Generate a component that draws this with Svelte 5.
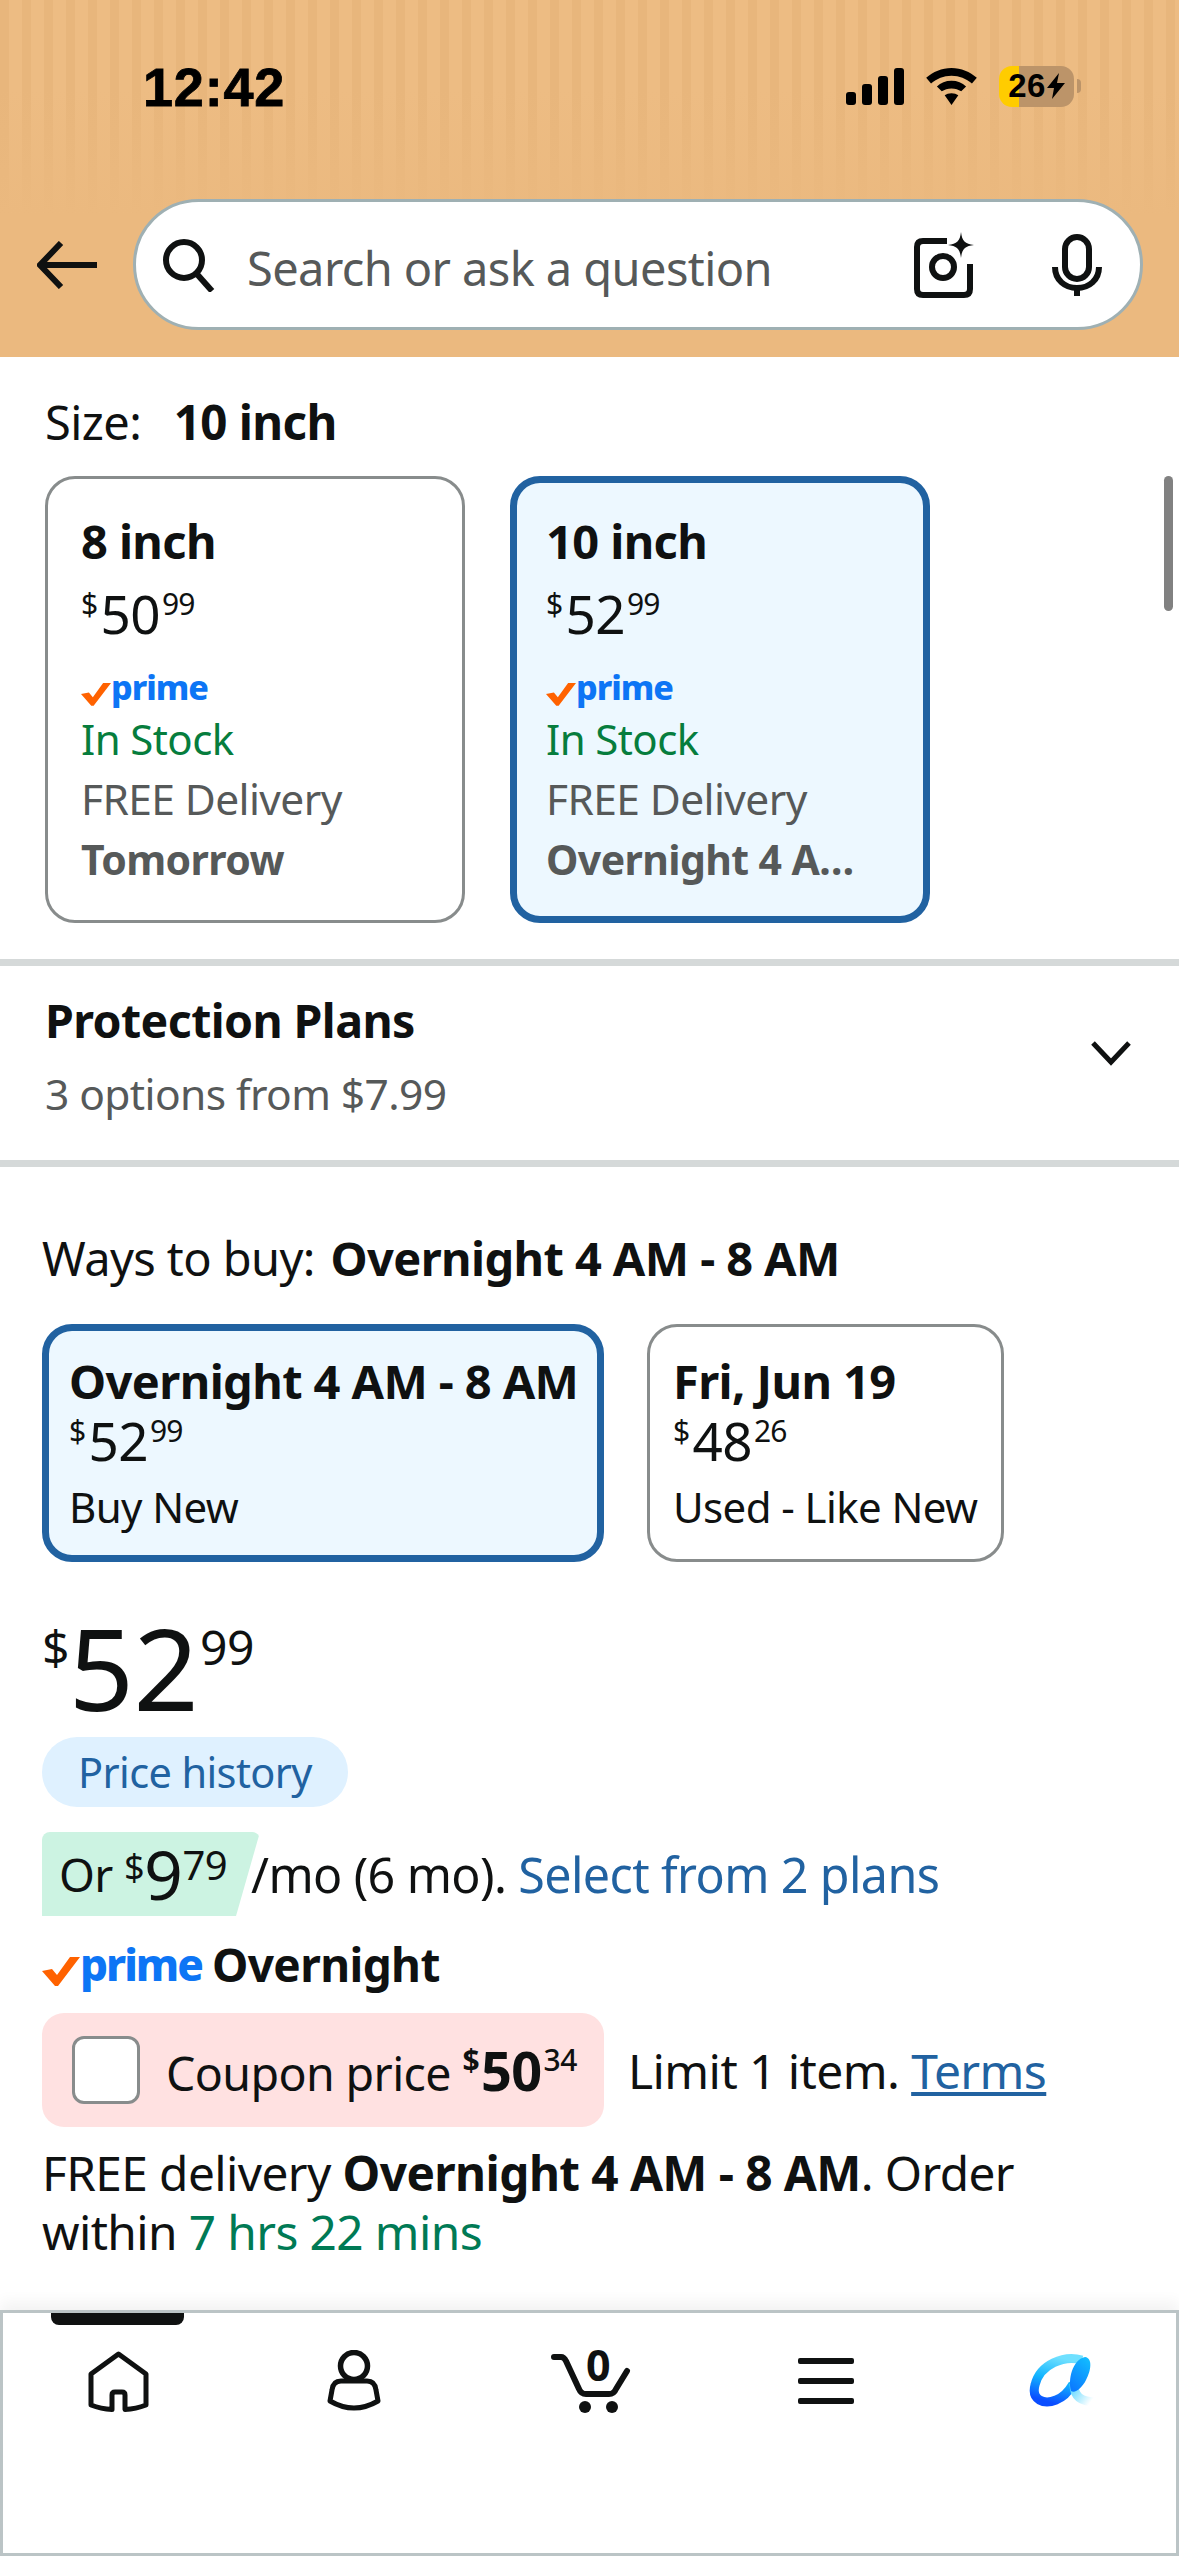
<script>
  const sizes = [
    { name: '8 inch', whole: '50', cents: '99', when: 'Tomorrow', selected: false },
    { name: '10 inch', whole: '52', cents: '99', when: 'Overnight 4 AM - 8 AM', selected: true }
  ];

  const ways = [
    { name: 'Overnight 4 AM - 8 AM', whole: '52', cents: '99', label: 'Buy New', selected: true },
    { name: 'Fri, Jun 19', whole: '48', cents: '26', label: 'Used - Like New', selected: false }
  ];
</script>

{#snippet check()}
  <svg class="check" viewBox="0 0 38 30" aria-hidden="true">
    <path d="M0 15 L10 13 L15 19 L28 1 L38 1 L16 30 L13 30 Z" fill="#ff6200" />
  </svg>
{/snippet}

<div class="page">
  <header class="top">
    <div class="status">
      <span class="time">12:42</span>
      <div class="status-icons">
        <svg class="signal" viewBox="0 0 58 37" aria-hidden="true">
          <rect x="0" y="24" width="10" height="13" rx="3" />
          <rect x="16" y="16" width="10" height="21" rx="3" />
          <rect x="32" y="8" width="10" height="29" rx="3" />
          <rect x="48" y="0" width="10" height="37" rx="3" />
        </svg>
        <svg class="wifi" viewBox="0 0 52 38" aria-hidden="true">
          <path d="M26 0 C36 0 45 4 52 10 L47 16 C41 11 34 8 26 8 C18 8 11 11 5 16 L0 10 C7 4 16 0 26 0 Z" />
          <path d="M26 13 C32 13 37 15 41 19 L36 24 C33 22 30 21 26 21 C22 21 19 22 16 24 L11 19 C15 15 20 13 26 13 Z" />
          <path d="M26 26 C29 26 31 27 33 28 L26 38 L19 28 C21 27 23 26 26 26 Z" />
        </svg>
        <div class="battery">
          <span class="level">26</span>
          <svg class="bolt" viewBox="0 0 18 26" aria-hidden="true">
            <path d="M12 0 L0 15 L7 15 L5 26 L18 10 L10 10 Z" />
          </svg>
        </div>
        <span class="nub"></span>
      </div>
    </div>
    <div class="search-row">
      <svg class="back" viewBox="0 0 60 48" aria-hidden="true">
        <path d="M24 2 L3 24 L24 46 M3 24 H60" fill="none" stroke="#0f1111" stroke-width="6" />
      </svg>
      <div class="search">
        <svg class="glass" viewBox="0 0 54 54" aria-hidden="true">
          <circle cx="22" cy="22" r="18" fill="none" stroke="#0f1111" stroke-width="6" />
          <path d="M34 35 L50 53" stroke="#0f1111" stroke-width="6" fill="none" />
        </svg>
        <span class="placeholder">Search or ask a question</span>
        <svg class="camera" viewBox="0 0 60 66" aria-hidden="true">
          <path d="M33 9 H9 Q3 9 3 15 V57 Q3 63 9 63 H50 Q56 63 56 57 V32" fill="none" stroke="#0f1111" stroke-width="6" />
          <circle cx="29" cy="35" r="11" fill="none" stroke="#0f1111" stroke-width="6" />
          <path d="M47 0 C48 9 51 12 60 13 C51 14 48 17 47 26 C46 17 43 14 34 13 C43 12 46 9 47 0 Z" fill="#0f1111" />
        </svg>
        <svg class="mic" viewBox="0 0 50 62" aria-hidden="true">
          <rect x="13" y="3" width="24" height="42" rx="12" fill="none" stroke="#0f1111" stroke-width="6" />
          <path d="M3 33 C3 46 13 54 25 54 C37 54 47 46 47 33" fill="none" stroke="#0f1111" stroke-width="6" />
          <path d="M25 54 V62" stroke="#0f1111" stroke-width="6" />
        </svg>
      </div>
    </div>
  </header>

  <main class="content">
    <section class="size">
      <div class="size-label">Size: <b>10 inch</b></div>
      <div class="size-cards">
        {#each sizes as s}
          <div class="size-card" class:selected={s.selected}>
            <div class="card-title">{s.name}</div>
            <div class="price"><sup>$</sup>{s.whole}<sup class="cents">{s.cents}</sup></div>
            <div class="prime small">{@render check()}<span>prime</span></div>
            <div class="stock">In Stock</div>
            <div class="muted">FREE Delivery</div>
            <div class="muted when">{s.when}</div>
          </div>
        {/each}
      </div>
      <span class="scrollbar"></span>
    </section>

    <section class="plans">
      <div>
        <div class="plans-title">Protection Plans</div>
        <div class="plans-sub">3 options from $7.99</div>
      </div>
      <svg class="chevron" viewBox="0 0 42 26" aria-hidden="true">
        <path d="M3 3 L21 22 L39 3" fill="none" stroke="#0f1111" stroke-width="5" />
      </svg>
    </section>

    <section class="buy">
      <div class="ways-label">Ways to buy: <b>Overnight 4 AM - 8 AM</b></div>
      <div class="way-cards">
        {#each ways as w}
          <div class="way-card" class:selected={w.selected}>
            <div class="card-title">{w.name}</div>
            <div class="price"><sup>$</sup>{w.whole}<sup class="cents">{w.cents}</sup></div>
            <div class="way-label">{w.label}</div>
          </div>
        {/each}
      </div>

      <div class="big-price"><sup>$</sup>52<sup class="big-cents">99</sup></div>
      <div class="pill">Price history</div>

      <div class="monthly">
        <span class="or">Or <sup>$</sup><span class="nine">9</span><sup class="or-cents">79</sup></span>
        <span class="per-month">/mo (6 mo). <span class="link">Select from 2 plans</span></span>
      </div>

      <div class="prime-line">
        <div class="prime large">{@render check()}<span>prime</span></div>
        <b>Overnight</b>
      </div>

      <div class="coupon-row">
        <div class="coupon">
          <span class="box"></span>
          <span>Coupon price <b class="coupon-price"><sup>$</sup>50<sup class="coupon-cents">34</sup></b></span>
        </div>
        <span class="limit">Limit 1 item. <span class="terms">Terms</span></span>
      </div>

      <p class="delivery">FREE delivery <b>Overnight 4 AM - 8 AM</b>. Order within <span class="countdown">7 hrs 22 mins</span></p>
    </section>
  </main>

  <nav class="tabs">
    <span class="active-tab"></span>
    <svg class="home" viewBox="0 0 61 61" aria-hidden="true">
      <path d="M30.5 3 L58 23 V54 Q48 58 37 58.500 V44 Q37 41 34 41 H27 Q24 41 24 44 V58.500 Q13 58 3 54 V23 Z" fill="none" stroke="#0f1111" stroke-width="5" stroke-linejoin="round" />
    </svg>
    <svg class="person" viewBox="0 0 54 62" aria-hidden="true">
      <circle cx="27" cy="16" r="13.500" fill="none" stroke="#0f1111" stroke-width="5.500" />
      <path d="M14 31 H40 Q48 31 49 40 L51 51 Q27 65 3 51 L5 40 Q6 31 14 31 Z" fill="none" stroke="#0f1111" stroke-width="5" stroke-linejoin="round" />
    </svg>
    <div class="cart">
      <span class="cart-count">0</span>
      <svg viewBox="0 0 82 70" aria-hidden="true">
        <path d="M5 11 H12 Q15 11 17 15 L30 43 Q32 48 37 48 H60 Q65 48 67 43 L78 25" fill="none" stroke="#0f1111" stroke-width="6" stroke-linecap="round" />
        <circle cx="36" cy="61" r="6" fill="#0f1111" />
        <circle cx="63" cy="61" r="6" fill="#0f1111" />
      </svg>
    </div>
    <div class="burger"><span></span><span></span><span></span></div>
    <svg class="alexa" viewBox="0 0 68 54" aria-hidden="true">
      <defs>
        <linearGradient id="a-left" x1="0.6" y1="0" x2="0.3" y2="1">
          <stop offset="0" stop-color="#6fe0ff" />
          <stop offset="0.5" stop-color="#12b5ff" />
          <stop offset="1" stop-color="#0a4dff" />
        </linearGradient>
        <linearGradient id="a-leaf" x1="0.8" y1="0" x2="0.3" y2="1">
          <stop offset="0" stop-color="#12bcff" />
          <stop offset="1" stop-color="#0b7bff" />
        </linearGradient>
        <linearGradient id="a-tail" x1="0" y1="0" x2="1" y2="0.6">
          <stop offset="0" stop-color="#5fd8ff" />
          <stop offset="1" stop-color="#ffffff" />
        </linearGradient>
      </defs>
      <path d="M54 6 C36 1 12 10 7 31 C3 46 16 51 28 46 C36 43 41 37 45 30" fill="none" stroke="url(#a-left)" stroke-width="9" />
      <path d="M46 30 C46 42 52 48 68 48" fill="none" stroke="url(#a-tail)" stroke-width="9" />
      <path d="M57 3 C65 4 63 17 58 26 C54 34 47 40 43 37 C40 26 44 6 57 3 Z" fill="url(#a-leaf)" />
    </svg>
  </nav>
</div>

<style>
  :global(body) {
    margin: 0;
    background: #fff;
  }

  .page {
    width: 1179px;
    height: 2556px;
    display: flex;
    flex-direction: column;
    overflow: hidden;
    font-family: "Noto Sans", sans-serif;
    color: #0f1111;
    font-size: 44px;
    letter-spacing: -0.6px;
  }

  sup {
    font-size: 0.55em;
    line-height: 0;
    vertical-align: baseline;
    position: relative;
    top: -0.75em;
  }

  b {
    font-weight: 700;
  }

  /* header */

  .top {
    height: 357px;
    flex: none;
    box-sizing: border-box;
    padding: 56px 36px 0 37px;
    background:
      linear-gradient(to bottom, rgba(235, 185, 127, 0) 25%, #ebb97f 60%),
      repeating-linear-gradient(to right, #e8b67c 0 9px, #edbc83 9px 22px),
      #ebb97f;
  }

  .status {
    display: flex;
    justify-content: space-between;
    align-items: center;
    height: 60px;
    padding: 0 0 0 106px;
  }

  .time {
    font-family: "Liberation Sans", sans-serif;
    font-weight: 700;
    font-size: 54px;
    letter-spacing: 0.8px;
    color: #000;
    -webkit-text-stroke: 0.8px #000;
    position: relative;
    top: 1px;
  }

  .status-icons {
    display: flex;
    align-items: center;
    margin-right: 62px;
    position: relative;
  }

  .signal {
    width: 58px;
    height: 37px;
    margin-right: 22px;
  }

  .wifi {
    width: 51px;
    height: 37px;
    margin-right: 22px;
  }

  .battery {
    width: 75px;
    height: 41px;
    border-radius: 13px;
    background: linear-gradient(to right, #ffcc00 0 20px, #bc9469 20px);
    display: flex;
    align-items: center;
    justify-content: center;
    gap: 1px;
  }

  .level {
    font-family: "Liberation Sans", sans-serif;
    font-weight: 700;
    font-size: 33px;
    letter-spacing: 0.5px;
    color: #000;
  }

  .bolt {
    width: 18px;
    height: 26px;
  }

  .nub {
    width: 4px;
    height: 14px;
    margin-left: 3px;
    border-radius: 0 4px 4px 0;
    background: #bc9469;
  }

  .search-row {
    display: flex;
    align-items: center;
    margin-top: 83px;
  }

  .back {
    width: 60px;
    height: 48px;
    flex: none;
    margin-right: 36px;
  }

  .search {
    flex: 1;
    height: 131px;
    box-sizing: border-box;
    display: flex;
    align-items: center;
    padding: 0 38px 0 26px;
    background: #fff;
    border: 3px solid #9fb0b3;
    border-radius: 66px;
  }

  .glass {
    width: 54px;
    height: 54px;
    flex: none;
    margin-right: 31px;
  }

  .placeholder {
    flex: 1;
    color: #565959;
    font-size: 47px;
    position: relative;
    top: 3px;
  }

  .camera {
    width: 60px;
    height: 66px;
    flex: none;
    margin-right: 78px;
  }

  .mic {
    width: 50px;
    height: 62px;
    flex: none;
  }

  /* size picker */

  .size {
    position: relative;
    padding: 37px 45px 36px;
    border-bottom: 7px solid #d5d9d9;
  }

  .size-label {
    font-size: 47px;
    line-height: 56px;
  }

  .size-label b {
    margin-left: 21px;
    font-size: 47.5px;
  }

  .size-cards {
    display: flex;
    gap: 45px;
    margin-top: 26px;
  }

  .size-card {
    width: 420px;
    height: 447px;
    box-sizing: border-box;
    padding: 33px 33px 0;
    border: 3px solid #888c8c;
    border-radius: 30px;
  }

  .size-card.selected,
  .way-card.selected {
    border: 7px solid #2162a1;
    background: #edf8ff;
  }

  .size-card.selected {
    padding: 29px 29px 0;
  }

  .card-title {
    font-size: 47px;
    font-weight: 700;
    line-height: 58px;
    white-space: nowrap;
  }

  .price {
    font-size: 53px;
    line-height: 62px;
    margin-top: 13px;
  }

  .price sup {
    font-size: 30px;
    top: -19px;
    margin-right: 3px;
  }

  .price .cents {
    font-size: 30px;
    letter-spacing: -1px;
    margin: 0 0 0 2px;
  }

  .prime {
    display: flex;
    align-items: flex-end;
    color: #0d75f5;
    font-weight: 800;
  }

  .prime.small {
    height: 60px;
    margin-top: 6px;
    font-size: 34px;
    line-height: 48px;
    letter-spacing: -1px;
  }

  .prime.small .check {
    width: 30px;
    height: 24px;
    margin-bottom: 5px;
  }

  .stock {
    color: #067d3d;
    font-size: 42px;
    line-height: 58px;
    margin-top: -1px;
  }

  .muted {
    color: #565959;
    font-size: 42.5px;
    line-height: 60px;
    position: relative;
    top: 1px;
  }

  .when {
    font-size: 41px;
    font-weight: 700;
    padding-right: 30px;
    white-space: nowrap;
    overflow: hidden;
    text-overflow: ellipsis;
  }

  .scrollbar {
    position: absolute;
    top: 119px;
    right: 6px;
    width: 9px;
    height: 135px;
    border-radius: 5px;
    background: #818181;
  }

  /* protection plans */

  .plans {
    display: flex;
    justify-content: space-between;
    align-items: center;
    padding: 23px 47px 36px 45px;
    border-bottom: 7px solid #d5d9d9;
  }

  .plans-title {
    font-size: 46.5px;
    font-weight: 700;
    line-height: 62px;
  }

  .plans-sub {
    color: #565959;
    font-size: 42.5px;
    line-height: 60px;
    margin-top: 13px;
  }

  .chevron {
    width: 42px;
    height: 26px;
    margin-top: 0;
    margin-bottom: 8px;
  }

  /* ways to buy */

  .buy {
    padding: 61px 42px 0;
  }

  .ways-label {
    font-size: 47px;
    line-height: 60px;
  }

  .ways-label b {
    font-size: 47px;
    margin-left: 4px;
  }

  .way-cards {
    display: flex;
    gap: 43px;
    margin-top: 36px;
  }

  .way-card {
    box-sizing: border-box;
    width: 357px;
    height: 238px;
    padding: 25px 23px 0;
    border: 3px solid #888c8c;
    border-radius: 30px;
  }

  .way-card.selected {
    width: 562px;
    padding: 21px 20px 0;
  }

  .way-card .price {
    margin-top: 0;
  }

  .way-label {
    font-size: 42px;
    line-height: 60px;
    margin-top: 5px;
    white-space: nowrap;
  }

  .big-price {
    font-size: 114px;
    line-height: 130px;
    margin-top: 40px;
  }

  .big-price sup {
    font-size: 48px;
    top: -46px;
    margin-right: 0;
  }

  .big-price .big-cents {
    font-size: 48px;
    margin: 0 0 0 2px;
  }

  .pill {
    display: inline-block;
    height: 70px;
    line-height: 70px;
    margin-top: 5px;
    padding: 0 36px;
    border-radius: 35px;
    background: #dff1ff;
    color: #2162a1;
    font-size: 41.5px;
  }

  .monthly {
    display: flex;
    align-items: center;
    height: 84px;
    margin-top: 25px;
    font-size: 48.4px;
  }

  .or {
    display: flex;
    align-items: center;
    height: 84px;
    box-sizing: border-box;
    width: 218px;
    padding-left: 17px;
    background: #ccf3e2;
    clip-path: polygon(0 0, 100% 0, 89% 100%, 0 100%);
    border-radius: 8px 8px 0 0;
    white-space: pre;
    font-size: 46px;
  }

  .or sup {
    position: static;
    font-size: 36px;
    line-height: 1;
    align-self: flex-start;
    margin-top: 17px;
  }

  .or .or-cents {
    font-size: 40px;
    margin-top: 13px;
  }

  .nine {
    font-size: 68px;
    line-height: 1;
  }

  .per-month {
    margin-left: -9px;
  }

  .link {
    color: #2162a1;
  }

  .prime-line {
    display: flex;
    align-items: center;
    gap: 10px;
    height: 60px;
    margin-top: 18px;
    font-size: 46px;
  }

  .prime.large {
    font-size: 44px;
    line-height: 60px;
    height: 60px;
    align-items: center;
    letter-spacing: -2px;
  }

  .prime.large .check {
    width: 38px;
    height: 30px;
    margin-top: 14px;
  }

  .coupon-row {
    display: flex;
    align-items: center;
    gap: 24px;
    margin-top: 19px;
  }

  .coupon {
    width: 562px;
    height: 114px;
    box-sizing: border-box;
    flex: none;
    display: flex;
    align-items: center;
    gap: 26px;
    padding-left: 30px;
    border-radius: 22px;
    background: #ffe1e1;
    white-space: nowrap;
    font-size: 46.5px;
  }

  .box {
    width: 68px;
    height: 68px;
    box-sizing: border-box;
    flex: none;
    background: #fff;
    border: 3px solid #888c8c;
    border-radius: 12px;
  }

  .coupon-price {
    font-size: 54px;
  }

  .coupon-price sup {
    font-size: 30px;
    top: -20px;
    margin-right: 2px;
  }

  .coupon-price .coupon-cents {
    font-size: 30px;
    font-weight: 500;
    margin: 0 0 0 2px;
  }

  .limit {
    font-size: 48px;
    white-space: nowrap;
  }

  .terms {
    color: #2162a1;
    text-decoration: underline;
  }

  .delivery {
    margin: 16px 0 0;
    font-size: 47.8px;
    line-height: 59px;
    width: 1060px;
  }

  .countdown {
    color: #007a55;
  }

  /* bottom tabs */

  .content {
    flex: 1;
    min-height: 0;
    overflow: hidden;
  }

  .tabs {
    position: relative;
    flex: none;
    height: 246px;
    box-sizing: border-box;
    display: grid;
    grid-template-columns: repeat(5, 236px);
    grid-auto-rows: 70px;
    align-items: center;
    justify-items: center;
    padding-top: 36px;
    box-shadow: inset 0 0 0 3px #bbc4c6, 0 -8px 14px rgba(15, 17, 17, 0.05);
  }

  .active-tab {
    position: absolute;
    top: 3px;
    left: 51px;
    width: 133px;
    height: 12px;
    border-radius: 0 0 8px 8px;
    background: #0f1111;
  }

  .home {
    width: 61px;
    height: 61px;
  }

  .person {
    width: 54px;
    height: 62px;
  }

  .cart {
    position: relative;
    width: 82px;
    height: 70px;
  }

  .cart svg {
    display: block;
    width: 82px;
    height: 70px;
  }

  .cart-count {
    position: absolute;
    top: -3px;
    left: 35px;
    width: 28px;
    text-align: center;
    font-size: 43px;
    font-weight: 700;
    line-height: 44px;
  }

  .burger {
    display: flex;
    flex-direction: column;
    gap: 14px;
  }

  .burger span {
    display: block;
    width: 56px;
    height: 6px;
    border-radius: 2px;
    background: #0f1111;
  }

  .alexa {
    width: 68px;
    height: 54px;
  }
</style>
